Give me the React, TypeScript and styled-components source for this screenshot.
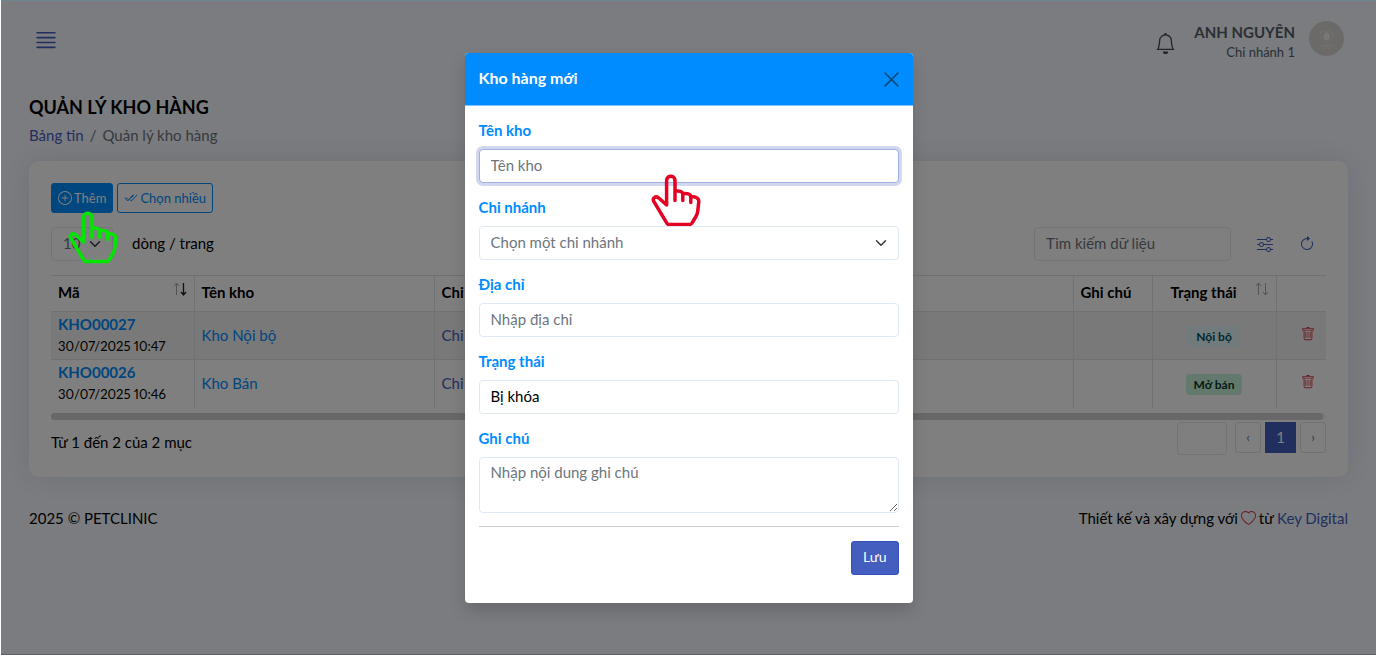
import React from "react";
import styled, { createGlobalStyle, css } from "styled-components";
import {
  BsArrowClockwise,
  BsBell,
  BsHeart,
  BsJustify,
  BsPlusCircle,
  BsSliders,
  BsTrash,
} from "react-icons/bs";

const blue = "#008cff";
const primary = "#435ebe";
const line = "#dee2e6";
const fieldLine = "#dfe8f3";

const GlobalStyle = createGlobalStyle`
  *, *::before, *::after { box-sizing: border-box; }
  body {
    margin: 0;
    background: #fff;
    color: #000;
    font-family: Lato, "Noto Sans", sans-serif;
    font-size: 15px;
    line-height: 22px;
  }
  button, input, select, textarea { font: inherit; color: inherit; margin: 0; }
  a { color: ${primary}; text-decoration: none; }
  h1, h2, p { margin: 0; }
`;

const Shell = styled.div`
  position: relative;
  min-height: 100vh;
  margin: 0 2px 0 1px;
  padding: 0 28px;
  background: #f6f9ff;
  overflow: hidden;
`;

const TopBar = styled.header`
  display: flex;
  align-items: center;
  justify-content: space-between;
  height: 80px;
  padding: 0 4px;
`;

const IconButton = styled.button<{ $tone?: string }>`
  display: inline-flex;
  align-items: center;
  justify-content: center;
  padding: 0;
  border: 0;
  background: none;
  color: ${(p) => p.$tone ?? primary};
`;

const Account = styled.div`
  display: flex;
  align-items: center;
  color: #555f6a;
`;

const BellButton = styled(IconButton)`
  margin-top: 6px;
`;

const AccountText = styled.div`
  margin: 4px 14px 0 18px;
  text-align: right;
  line-height: 20px;
`;

const AccountName = styled.div`
  font-weight: 700;
`;

const Branch = styled.div`
  font-size: 13px;
`;

const Avatar = styled.svg`
  display: block;
  width: 35px;
  height: 35px;
  margin-bottom: 4px;
`;

const Title = styled.h1`
  margin-top: 14px;
  font-size: 18px;
  line-height: 26px;
  font-weight: 700;
`;

const Breadcrumb = styled.nav`
  display: flex;
  gap: 6px;
  margin: 4px 0 15px;
  color: #6c757d;
`;

const Card = styled.main`
  padding: 22px;
  border-radius: 10px;
  background: #fff;
  box-shadow: 0 0 30px rgba(1, 41, 112, 0.12);
`;

const Actions = styled.div`
  display: flex;
  gap: 4px;
`;

const ActionButton = styled.button<{ $filled?: boolean }>`
  display: inline-flex;
  align-items: center;
  gap: 2px;
  height: 30px;
  padding: 0 6px;
  border: 1px solid ${blue};
  border-radius: 3px;
  font-size: 13px;
  background: ${(p) => (p.$filled ? blue : "transparent")};
  color: ${(p) => (p.$filled ? "#fff" : blue)};
`;

const Filters = styled.div`
  display: flex;
  align-items: center;
  justify-content: space-between;
  margin: 14px 0;
`;

const Tools = styled.div`
  display: flex;
  align-items: center;
  gap: 26px;
  padding-right: 11px;
`;

const LengthLabel = styled.label`
  display: flex;
  align-items: center;
  gap: 19px;
`;

const LengthText = styled.span`
  padding-bottom: 3px;
`;

const fieldStyle = css`
  display: block;
  width: 100%;
  height: 34px;
  padding: 0 11px 2px;
  border: 1px solid ${fieldLine};
  border-radius: 4px;
  background: #fff;
  outline: none;
  appearance: none;
  &::placeholder { color: #6c757d; opacity: 1; }
`;

const Input = styled.input`
  ${fieldStyle}
`;

const NameInput = styled(Input)`
  border-color: #a1afdf;
  box-shadow: 0 0 0 3px rgba(67, 94, 190, 0.25);
`;

const Select = styled.select<{ $muted?: boolean }>`
  ${fieldStyle}
  color: ${(p) => (p.$muted ? "#6c757d" : "#000")};
`;

const SelectBox = styled.div<{ $width?: string }>`
  position: relative;
  width: ${(p) => p.$width ?? "100%"};
`;

const SelectArrow = styled.svg`
  position: absolute;
  top: 11px;
  right: 12px;
  width: 12px;
  height: 12px;
  pointer-events: none;
`;

const SearchBox = styled.div`
  width: 197px;
`;

const TableArea = styled.div`
  overflow: hidden;
`;

const Table = styled.table`
  width: 100%;
  border-collapse: collapse;
  table-layout: fixed;
`;

const HeadCell = styled.th`
  height: 36px;
  padding: 0 7px 3px;
  border-top: 1px solid ${line};
  border-bottom: 1px solid ${line};
  font-weight: 700;
  text-align: left;
  & + & { border-left: 1px solid ${line}; }
`;

const HeadContent = styled.div<{ $inset?: boolean }>`
  display: flex;
  align-items: center;
  justify-content: space-between;
  padding-left: ${(p) => (p.$inset ? 11 : 0)}px;
`;

const SortIcon = styled.svg`
  display: block;
  width: 14px;
  height: 16px;
  margin-bottom: 6px;
`;

const Row = styled.tr`
  height: 48px;
  &:nth-child(odd) { background: #f2f2f2; }
  & + & { border-top: 1px solid ${line}; }
`;

const Cell = styled.td<{ $align?: "center" | "right" }>`
  padding: 1px 7px 2px;
  text-align: ${(p) => p.$align ?? "left"};
  & + & { border-left: 1px solid ${line}; }
`;

const Code = styled.a`
  display: block;
  font-weight: 700;
  color: ${blue};
`;

const Stamp = styled.div`
  font-size: 13px;
  font-variant-numeric: proportional-nums;
`;

const NameLink = styled.a`
  color: ${blue};
`;

const Badge = styled.span<{ $open?: boolean }>`
  display: inline-block;
  padding: 0 8px;
  border-radius: 4px;
  font-size: 12px;
  line-height: 21px;
  font-weight: 700;
  background: ${(p) => (p.$open ? "#c9f2dc" : "#e2f4fa")};
  color: ${(p) => (p.$open ? "#0a3622" : "#055160")};
`;

const DeleteButton = styled(IconButton)`
  margin-right: 4px;
`;

const ScrollTrack = styled.div`
  margin-top: 5px;
  padding-right: 3px;
  border-radius: 4px;
  background: #f4f4f4;
`;

const ScrollThumb = styled.div`
  height: 7px;
  border-radius: 4px;
  background: #d0d0d0;
`;

const TableFooter = styled.div`
  display: flex;
  align-items: flex-start;
  justify-content: space-between;
  margin-top: 2px;
`;

const Summary = styled.p`
  padding-top: 9px;
`;

const PageInput = styled(Input)`
  width: 50px;
  height: 33px;
  margin-right: 4px;
`;

const Pager = styled.div`
  display: flex;
  gap: 4px;
`;

const PageButton = styled.button<{ $current?: boolean }>`
  height: 31px;
  width: ${(p) => (p.$current ? 31 : 26)}px;
  padding: 0 0 1px;
  border: 1px solid ${(p) => (p.$current ? primary : line)};
  border-radius: ${(p) => (p.$current ? 0 : 3)}px;
  background: ${(p) => (p.$current ? primary : "#fff")};
  color: ${(p) => (p.$current ? "#fff" : "#6c757d")};
  font-size: ${(p) => (p.$current ? 15 : 13)}px;
`;

const Footer = styled.footer`
  display: flex;
  justify-content: space-between;
  padding: 30px 0 24px;
`;

const Heart = styled(BsHeart)`
  margin: 0 3px;
  color: #dc3545;
  vertical-align: -2px;
`;

const Backdrop = styled.div`
  position: absolute;
  inset: 0;
  border-top: 1px solid #6a8791;
  border-bottom: 1px solid #5f5e66;
  background: rgba(0, 0, 0, 0.5);
  background-clip: padding-box;
`;

const ModalLayer = styled.div`
  position: absolute;
  inset: 0;
  padding: 53px 0;
`;

const Dialog = styled.section`
  width: 448px;
  max-width: 100%;
  margin: 0 auto;
  border-radius: 4px;
  background: #fff;
  overflow: hidden;
  box-shadow: 0 8px 16px rgba(0, 0, 0, 0.15);
`;

const DialogHead = styled.div`
  display: flex;
  align-items: center;
  justify-content: space-between;
  height: 53px;
  padding: 0 14px;
  border-bottom: 1px solid #7fc5ff;
  background: ${blue};
`;

const DialogTitle = styled.h2`
  padding-bottom: 2px;
  font-size: 16px;
  font-weight: 700;
  color: #fff;
`;

const Form = styled.form`
  padding: 13px 14px 28px;
`;

const Field = styled.div`
  position: relative;
  margin-bottom: 13px;
`;

const Label = styled.label`
  display: block;
  margin-bottom: 8px;
  font-weight: 700;
  color: ${blue};
`;

const Note = styled.textarea`
  ${fieldStyle}
  height: 56px;
  padding: 3px 11px;
  resize: vertical;
`;

const Divider = styled.hr`
  height: 1px;
  margin: 0 0 14px;
  border: 0;
  background: #ccced0;
`;

const FormActions = styled.div`
  display: flex;
  justify-content: flex-end;
`;

const SaveButton = styled.button`
  height: 34px;
  padding: 0 11px 2px;
  border: 1px solid #304fb8;
  border-radius: 3px;
  background: ${primary};
  color: #fff;
  font-size: 14px;
`;

const HandSvg = styled.svg<{ $left: string; $top: number }>`
  position: absolute;
  left: ${(p) => p.$left};
  top: ${(p) => p.$top}px;
  width: 50px;
  height: 53px;
  pointer-events: none;
`;

const Hand = ({ color, left, top }: { color: string; left: string; top: number }) => (
  <HandSvg $left={left} $top={top} viewBox="0 0 50 53" fill="none" stroke={color} strokeWidth="3.5" strokeLinecap="round" strokeLinejoin="round" aria-hidden="true">
    <path d="M24 26.5V6.4C24 .9 15.6.9 15.6 6.4V31L7.5 23.8C4.6 21.5 1 24.3 2.8 27.4L16 49.3Q16.7 50.5 18 50.5H38.8Q40.2 50.5 41 49.2L45.2 42Q46.6 39.5 46.8 36.5L47.8 27.5C47.9 23.4 43.7 22.6 39.8 22.6V28.5M24 17.3C28 16.7 31.8 17.2 31.8 20.2V26.5M31.8 19.7C36 19.1 39.8 19.8 39.8 22.8" />
  </HandSvg>
);

const Chevron = () => (
  <SelectArrow viewBox="0 0 16 16" fill="none" stroke="#343a40" strokeWidth="2" strokeLinecap="round" strokeLinejoin="round" aria-hidden="true">
    <path d="m2 5 6 6 6-6" />
  </SelectArrow>
);

const Sort = ({ active }: { active?: boolean }) => (
  <SortIcon viewBox="0 0 14 16" fill="none" aria-hidden="true">
    <path d="M3.5 14V2M1 5l2.5-3L6 5" stroke="#a8a8a8" />
    <path d="M10.5 2v12M8 11l2.5 3 2.5-3" stroke={active ? "#222" : "#a8a8a8"} strokeWidth={active ? 1.3 : 1} />
  </SortIcon>
);

const DoubleCheck = () => (
  <svg width="14" height="14" viewBox="0 0 14 14" fill="none" stroke="currentColor" strokeWidth="1" strokeLinecap="round" strokeLinejoin="round" aria-hidden="true">
    <path d="m1 7 2.7 3L9 4M5.7 8.4 7.3 10 13 4M7.2 6.8 9.4 4.4M2.5 6.8l1.3 1.4" />
  </svg>
);

const rows = [
  { code: "KHO00027", stamp: "30/07/2025 10:47", name: "Kho Nội bộ", status: "Nội bộ", open: false },
  { code: "KHO00026", stamp: "30/07/2025 10:46", name: "Kho Bán", status: "Mở bán", open: true },
];

export default function App() {
  return (
    <>
      <GlobalStyle />
      <Shell>
        <TopBar>
          <IconButton aria-label="Menu">
            <BsJustify size={26} />
          </IconButton>
          <Account>
            <BellButton aria-label="Thông báo" $tone="#434b53">
              <BsBell size={21} />
            </BellButton>
            <AccountText>
              <AccountName>ANH NGUYÊN</AccountName>
              <Branch>Chi nhánh 1</Branch>
            </AccountText>
            <Avatar viewBox="0 0 35 35" aria-hidden="true">
              <circle cx="17.5" cy="17.5" r="17.5" fill="#d6d4d0" />
              <path d="M17.5 21.500c-4.500-2.500-7-5.500-6.500-8.500.8-3.500 4.500-4 6.500-1.500 2-2.500 5.700-2 6.500 1.500.5 3-2 6-6.500 8.500Z" fill="none" stroke="#e8e6e3" />
              <path d="m14.500 17 .5-4 2-2 2.500 1 1.500 3-1.500 4h-3.500Z" fill="#f0eeeb" />
              <path d="M9 24.500h17M12 27h11" stroke="#e3e1dd" />
            </Avatar>
          </Account>
        </TopBar>

        <Title>QUẢN LÝ KHO HÀNG</Title>
        <Breadcrumb aria-label="breadcrumb">
          <a href="#home">Bảng tin</a>
          <span>/</span>
          <span>Quản lý kho hàng</span>
        </Breadcrumb>

        <Card>
          <Actions>
            <ActionButton $filled>
              <BsPlusCircle size={14} />
              Thêm
            </ActionButton>
            <ActionButton>
              <DoubleCheck />
              Chọn nhiều
            </ActionButton>
          </Actions>

          <Filters>
            <LengthLabel>
              <SelectBox $width="62px">
                <Select $muted defaultValue="10">
                  <option>10</option>
                </Select>
                <Chevron />
              </SelectBox>
              <LengthText>dòng / trang</LengthText>
            </LengthLabel>
            <Tools>
              <SearchBox>
                <Input type="search" aria-label="Tìm kiếm dữ liệu" placeholder="Tìm kiếm dữ liệu" />
              </SearchBox>
              <IconButton aria-label="Bộ lọc">
                <BsSliders size={16} />
              </IconButton>
              <IconButton aria-label="Tải lại">
                <BsArrowClockwise size={16} />
              </IconButton>
            </Tools>
          </Filters>

          <TableArea>
            <Table>
              <colgroup>
                <col style={{ width: 143 }} />
                <col style={{ width: 240 }} />
                <col />
                <col style={{ width: 79 }} />
                <col style={{ width: 124 }} />
                <col style={{ width: 50 }} />
              </colgroup>
              <thead>
                <tr>
                  <HeadCell>
                    <HeadContent>Mã<Sort active /></HeadContent>
                  </HeadCell>
                  <HeadCell>Tên kho</HeadCell>
                  <HeadCell>Chi nhánh</HeadCell>
                  <HeadCell>Ghi chú</HeadCell>
                  <HeadCell>
                    <HeadContent $inset>Trạng thái<Sort /></HeadContent>
                  </HeadCell>
                  <HeadCell />
                </tr>
              </thead>
              <tbody>
                {rows.map((r) => (
                  <Row key={r.code}>
                    <Cell>
                      <Code href={`#${r.code}`}>{r.code}</Code>
                      <Stamp>{r.stamp}</Stamp>
                    </Cell>
                    <Cell><NameLink href={`#${r.code}`}>{r.name}</NameLink></Cell>
                    <Cell><a href="#branch">Chi nhánh 1</a></Cell>
                    <Cell />
                    <Cell $align="center"><Badge $open={r.open}>{r.status}</Badge></Cell>
                    <Cell $align="right">
                      <DeleteButton $tone="#dc3545" aria-label={`Xóa ${r.code}`}>
                        <BsTrash size={14} />
                      </DeleteButton>
                    </Cell>
                  </Row>
                ))}
              </tbody>
            </Table>
          </TableArea>
          <ScrollTrack><ScrollThumb /></ScrollTrack>

          <TableFooter>
            <Summary>Từ 1 đến 2 của 2 mục</Summary>
            <Pager>
              <PageInput aria-label="Trang" />
              <PageButton aria-label="Trang trước">‹</PageButton>
              <PageButton $current>1</PageButton>
              <PageButton aria-label="Trang sau">›</PageButton>
            </Pager>
          </TableFooter>
        </Card>

        <Footer>
          <p>2025 © PETCLINIC</p>
          <p>
            Thiết kế và xây dựng với
            <Heart size={15} />
            từ <a href="#key-digital">Key Digital</a>
          </p>
        </Footer>

        <Backdrop />
        <Hand color="#00e600" left="67px" top={211} />

        <ModalLayer>
          <Dialog role="dialog" aria-labelledby="dialog-title">
            <DialogHead>
              <DialogTitle id="dialog-title">Kho hàng mới</DialogTitle>
              <IconButton $tone="#07467a" aria-label="Đóng">
                <svg width="15" height="15" viewBox="0 0 15 15" stroke="currentColor" strokeWidth="1.6" strokeLinecap="round">
                  <path d="m1 1 13 13M14 1 1 14" />
                </svg>
              </IconButton>
            </DialogHead>
            <Form onSubmit={(e) => e.preventDefault()}>
              <Field>
                <Label htmlFor="name">Tên kho</Label>
                <NameInput id="name" placeholder="Tên kho" />
                <Hand color="#e60023" left="172px" top={55} />
              </Field>
              <Field>
                <Label htmlFor="branch">Chi nhánh</Label>
                <SelectBox>
                  <Select id="branch" $muted defaultValue="">
                    <option value="">Chọn một chi nhánh</option>
                  </Select>
                  <Chevron />
                </SelectBox>
              </Field>
              <Field>
                <Label htmlFor="address">Địa chỉ</Label>
                <Input id="address" placeholder="Nhập địa chỉ" />
              </Field>
              <Field>
                <Label htmlFor="status">Trạng thái</Label>
                <Select id="status" defaultValue="locked">
                  <option value="locked">Bị khóa</option>
                </Select>
              </Field>
              <Field>
                <Label htmlFor="note">Ghi chú</Label>
                <Note id="note" placeholder="Nhập nội dung ghi chú" />
              </Field>
              <Divider />
              <FormActions>
                <SaveButton type="submit">Lưu</SaveButton>
              </FormActions>
            </Form>
          </Dialog>
        </ModalLayer>
      </Shell>
    </>
  );
}
